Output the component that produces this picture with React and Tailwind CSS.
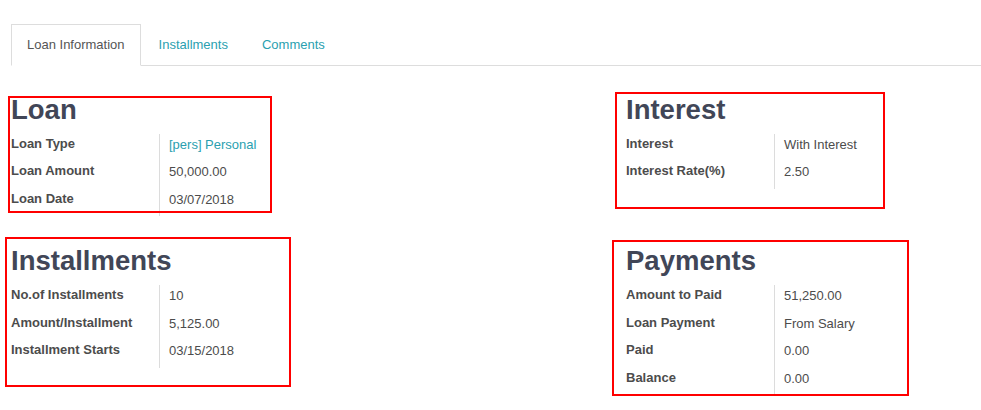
const sections = [
  {
    title: "Loan",
    rows: [
      ["Loan Type", "[pers] Personal", true],
      ["Loan Amount", "50,000.00"],
      ["Loan Date", "03/07/2018"],
    ],
  },
  {
    title: "Interest",
    rows: [
      ["Interest", "With Interest"],
      ["Interest Rate(%)", "2.50"],
    ],
  },
  {
    title: "Installments",
    rows: [
      ["No.of Installments", "10"],
      ["Amount/Installment", "5,125.00"],
      ["Installment Starts", "03/15/2018"],
    ],
  },
  {
    title: "Payments",
    rows: [
      ["Amount to Paid", "51,250.00"],
      ["Loan Payment", "From Salary"],
      ["Paid", "0.00"],
      ["Balance", "0.00"],
    ],
  },
];

function Section({ title, rows }) {
  return (
    <div>
      <h1 className="h-[30px] text-[27.5px] font-bold leading-[30px] text-[#414657]">{title}</h1>
      <div className="mt-[9px]">
        {rows.map(([label, value, link]) => (
          <div key={label} className="flex h-[27.5px]">
            <div className="w-[149px] border-r border-[#dcdcdc] pt-[1px] text-[13px] font-bold leading-[18px] text-[#4c4c4c]">
              {label}
            </div>
            <div
              className={
                "pl-[9px] pt-[2px] text-[13px] leading-[18px] " +
                (link ? "text-[#2a9fb0]" : "text-[#4c4c4c]")
              }
            >
              {value}
            </div>
          </div>
        ))}
      </div>
    </div>
  );
}

export default function App() {
  return (
    <div className="h-[410px] w-[981px] overflow-hidden bg-white font-['Liberation_Sans',Arial,sans-serif]">
      <ul className="ml-[11px] mt-[24px] flex border-b border-[#dddddd]">
        <li className="-mb-px mr-[2px] border border-[#dddddd] border-b-white bg-white px-[15px] pb-[9px] pt-[11px] text-[13px] leading-[18.5px] text-[#555555]">
          Loan Information
        </li>
        <li className="mr-[2px] border border-transparent px-[15px] pb-[9px] pt-[11px] text-[13px] leading-[18.5px] text-[#2a9fb0]">
          Installments
        </li>
        <li className="border border-transparent px-[15px] pb-[9px] pt-[11px] text-[13px] leading-[18.5px] text-[#2a9fb0]">
          Comments
        </li>
      </ul>
      <div className="relative ml-[11px] mt-[29px] grid grid-cols-[615px_1fr] gap-y-[30px]">
        {sections.map((s) => (
          <Section key={s.title} {...s} />
        ))}
        <div className="pointer-events-none absolute left-[-3px] top-[1px] h-[117px] w-[264px] border-2 border-[#ff0000]" />
        <div className="pointer-events-none absolute left-[604px] top-[-3px] h-[117px] w-[270px] border-2 border-[#ff0000]" />
        <div className="pointer-events-none absolute left-[-6px] top-[142px] h-[150px] w-[286px] border-2 border-[#ff0000]" />
        <div className="pointer-events-none absolute left-[601px] top-[145px] h-[156px] w-[297px] border-2 border-[#ff0000]" />
      </div>
    </div>
  );
}
